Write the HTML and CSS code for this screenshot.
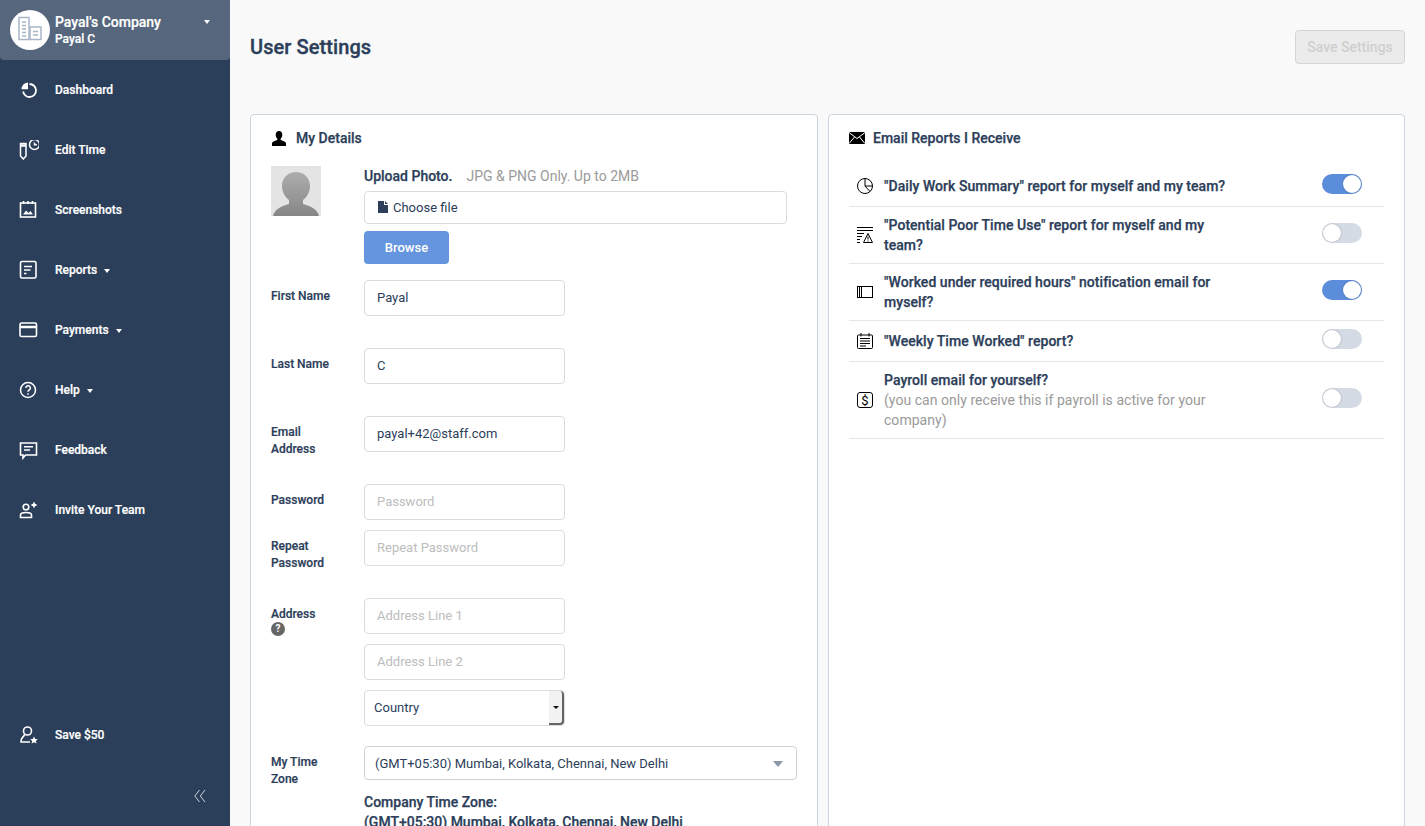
FILE: index.html
```html
<!DOCTYPE html>
<html lang="en">
<head>
    <meta charset="UTF-8">
    <title>User Settings</title>
    <link rel="stylesheet" href="styles.css">
</head>
<body>
    <aside class="sidebar">
        <div class="company">
            <div class="company-logo">
                <svg width="36" height="30" viewBox="0 0 36 30" fill="none" stroke="#a9b6c8" stroke-width="1.5">
                    <rect x="9" y="4.500" width="10" height="22"/>
                    <path d="M12 9h4M12 12.500h4M12 16h4M12 19.500h4M12 23h4"/>
                    <rect x="20" y="14" width="11" height="12.500"/>
                    <path d="M23 18.500h5M23 22h5"/>
                </svg>
            </div>
            <div class="company-text">
                <div class="company-name">Payal's Company</div>
                <div class="company-user">Payal C</div>
            </div>
            <span class="caret company-caret"></span>
        </div>

        <nav class="nav">
            <a class="nav-item">
                <svg class="nav-icon" viewBox="0 0 20 20" fill="none" stroke="#fff" stroke-width="1.800"><path d="M10.500 4a6.500 6.500 0 1 1-6.400 7.500"/><path d="M2.500 9.200A7 7 0 0 1 9 2.500v6.700z" fill="#fff" stroke="none"/></svg>
                Dashboard
            </a>
            <a class="nav-item">
                <svg class="nav-icon" viewBox="0 0 20 20" fill="none" stroke="#fff" stroke-width="1.500"><path d="M1.500 3.500H7v12.500l-2.700 3-2.800-3z"/><path d="M1.500 5.500H7" stroke-width="2.500"/><circle cx="15.500" cy="4.500" r="5"/><path d="M15.500 2.500v2.300h2.300"/></svg>
                Edit Time
            </a>
            <a class="nav-item">
                <svg class="nav-icon" viewBox="0 0 20 20" fill="none" stroke="#fff" stroke-width="1.600"><rect x="1.500" y="3" width="15" height="14"/><path d="M4.500 1v3M9 1v3M13.500 1v3"/><path d="M4 14.500l3-4 2.500 2.500 2-2 2.500 3.500z" fill="#fff" stroke="none"/></svg>
                Screenshots
            </a>
            <a class="nav-item">
                <svg class="nav-icon" viewBox="0 0 20 20" fill="none" stroke="#fff" stroke-width="1.600"><rect x="1.500" y="1.500" width="15.500" height="16.500" rx="1.500"/><path d="M5 6.500h8M5 10h6.500M5 13.500h2.500"/></svg>
                Reports<span class="caret"></span>
            </a>
            <a class="nav-item">
                <svg class="nav-icon" viewBox="0 0 20 20" fill="none" stroke="#fff" stroke-width="1.600"><rect x="1" y="3" width="16.500" height="13.500" rx="1.500"/><path d="M1 7h16.500" stroke-width="2.500"/></svg>
                Payments<span class="caret"></span>
            </a>
            <a class="nav-item">
                <svg class="nav-icon" viewBox="0 0 20 20" fill="none" stroke="#fff" stroke-width="1.500"><circle cx="9" cy="10" r="7.500"/><path d="M6.800 8a2.300 2.300 0 1 1 3.400 2c-.8.500-1.200.9-1.200 1.800"/><path d="M9 13.200v1.500"/></svg>
                Help<span class="caret"></span>
            </a>
            <a class="nav-item">
                <svg class="nav-icon" viewBox="0 0 20 20" fill="none" stroke="#fff" stroke-width="1.600"><path d="M1.500 3h16v12H6.500l-2.500 3v-3H1.500z"/><path d="M5 6.800h9M5 10h6"/></svg>
                Feedback
            </a>
            <a class="nav-item">
                <svg class="nav-icon" viewBox="0 0 20 20" fill="none" stroke="#fff" stroke-width="1.600"><circle cx="7" cy="7" r="2.800"/><path d="M1.500 17.500v-2.500c0-1.500 1.500-2.500 5.500-2.500s5.500 1 5.500 2.500v2.500z"/><path d="M15 2.500v5M12.500 5h5" stroke-width="1.800"/></svg>
                Invite Your Team
            </a>
        </nav>

        <a class="nav-item nav-bottom">
            <svg class="nav-icon" viewBox="0 0 20 20" fill="none" stroke="#fff" stroke-width="1.600"><circle cx="8.500" cy="6" r="4"/><path d="M5.500 9.500c-.5 2-2.500 3-3 4.500-.3 1-.5 2-.5 3h9"/><path d="M15 11.500l1.200 2.400 2.600.3-1.900 1.800.5 2.600-2.400-1.300-2.400 1.300.5-2.600-1.900-1.800 2.600-.3z" fill="#fff" stroke="none"/></svg>
            Save $50
        </a>
        <div class="collapse">
            <svg width="12" height="14" viewBox="0 0 12 14" fill="none" stroke="#c9d1dc" stroke-width="1"><path d="M5.500 1L.8 7l4.700 6M11 1L6.300 7l4.700 6"/></svg>
        </div>
    </aside>

    <main class="main">
        <header class="page-header">
            <h1>User Settings</h1>
            <button class="save-btn" disabled>Save Settings</button>
        </header>

        <div class="cards">
            <section class="card details-card">
                <h2 class="card-title">
                    <svg width="14" height="15" viewBox="0 0 14 15" fill="#000"><path d="M7 0c2 0 3.300 1.500 3.300 3.700 0 1.600-.7 3-1.600 3.900v1.300c2.500.8 5.300 1.700 5.300 3.600V15H0v-2.500c0-1.900 2.800-2.800 5.300-3.600V7.600C4.400 6.700 3.700 5.300 3.700 3.700 3.700 1.500 5 0 7 0z"/></svg>
                    My Details
                </h2>

                <div class="upload-row">
                    <div class="avatar">
                        <svg width="50" height="50" viewBox="0 0 50 50">
                            <defs>
                                <linearGradient id="avatarFill" x1="0" y1="0" x2="0" y2="1">
                                    <stop offset="0" stop-color="#adadad"/>
                                    <stop offset="1" stop-color="#868686"/>
                                </linearGradient>
                            </defs>
                            <path fill="url(#avatarFill)" d="M25 6c8 0 14 6 14 14 0 6-3 11-7 14v4c6 2 14 4 16 12H2c2-8 10-10 16-12v-4c-4-3-7-8-7-14 0-8 6-14 14-14z"/>
                        </svg>
                    </div>
                    <div class="upload-body">
                        <div class="upload-label"><strong>Upload Photo.</strong><span class="upload-hint">JPG &amp; PNG Only. Up to 2MB</span></div>
                        <div class="file-box">
                            <svg width="10" height="12" viewBox="0 0 10 12" fill="#2c3e5a"><path d="M0 0h6v4h4v8H0zM7 0l3 3H7z"/></svg>
                            Choose file
                        </div>
                        <button class="browse-btn">Browse</button>
                    </div>
                </div>

                <div class="form-row row-gap">
                    <label class="form-label">First Name</label>
                    <input class="text-input" type="text" value="Payal">
                </div>
                <div class="form-row row-gap">
                    <label class="form-label">Last Name</label>
                    <input class="text-input" type="text" value="C">
                </div>
                <div class="form-row row-gap">
                    <label class="form-label">Email Address</label>
                    <input class="text-input" type="text" value="payal+42@staff.com">
                </div>
                <div class="form-row row-gap-small">
                    <label class="form-label">Password</label>
                    <input class="text-input" type="text" placeholder="Password">
                </div>
                <div class="form-row row-gap">
                    <label class="form-label">Repeat Password</label>
                    <input class="text-input" type="text" placeholder="Repeat Password">
                </div>
                <div class="form-row row-gap-country">
                    <label class="form-label">Address<span class="help-dot">?</span></label>
                    <div class="address-fields">
                        <input class="text-input" type="text" placeholder="Address Line 1">
                        <input class="text-input" type="text" placeholder="Address Line 2">
                        <div class="country-select">
                            Country
                            <span class="country-arrow"></span>
                        </div>
                    </div>
                </div>
                <div class="form-row">
                    <label class="form-label">My Time Zone</label>
                    <div class="zone-fields">
                        <div class="zone-select">
                            (GMT+05:30) Mumbai, Kolkata, Chennai, New Delhi
                            <span class="zone-arrow"></span>
                        </div>
                        <div class="company-zone">Company Time Zone:<br>(GMT+05:30) Mumbai, Kolkata, Chennai, New Delhi</div>
                    </div>
                </div>
            </section>

            <section class="card reports-card">
                <h2 class="card-title">
                    <svg width="16" height="12" viewBox="0 0 16 12"><rect width="16" height="12" fill="#000"/><path d="M0 .5l8 6 8-6M0 11.500l5.500-6.500M16 11.500L10.500 5" fill="none" stroke="#fff" stroke-width="1"/></svg>
                    Email Reports I Receive
                </h2>

                <div class="report-row row-first">
                    <svg class="report-icon" viewBox="0 0 16 16" fill="none" stroke="#000"><circle cx="8" cy="8" r="7.500"/><path d="M8 .5V8h7.500M8 8l5 5.500"/></svg>
                    <div class="report-text">"Daily Work Summary" report for myself and my team?</div>
                    <span class="toggle on"></span>
                </div>
                <div class="report-row">
                    <svg class="report-icon" viewBox="0 0 16 16" fill="none" stroke="#000"><path d="M0 .5h16M0 3.500h16M0 6.500h7M0 9.500h5M0 12.500h3M0 15.500h3"/><path d="M11 6.500l4.500 9h-9z"/><path d="M11 9.500v3M11 13.500v1"/></svg>
                    <div class="report-text">"Potential Poor Time Use" report for myself and my team?</div>
                    <span class="toggle"></span>
                </div>
                <div class="report-row">
                    <svg class="report-icon" viewBox="0 0 16 12" fill="none" stroke="#000"><rect x=".5" y=".5" width="15" height="11"/><path d="M2.500 1v10M4.500 1v10"/></svg>
                    <div class="report-text">"Worked under required hours" notification email for myself?</div>
                    <span class="toggle on"></span>
                </div>
                <div class="report-row">
                    <svg class="report-icon" viewBox="0 0 16 16" fill="none" stroke="#000"><rect x=".5" y="2" width="15" height="13.500" rx="1"/><path d="M4 0v3.500M12 0v3.500M3 5.500h10M3 8h10M3 10.500h10M3 13h6"/></svg>
                    <div class="report-text">"Weekly Time Worked" report?</div>
                    <span class="toggle"></span>
                </div>
                <div class="report-row">
                    <svg class="report-icon" viewBox="0 0 16 16" fill="none" stroke="#000"><rect x=".5" y=".5" width="15" height="15" rx="2.500"/><text class="dollar-glyph" x="8" y="12.800" text-anchor="middle" fill="#000" stroke="none">$</text></svg>
                    <div class="report-text">Payroll email for yourself?<br><span class="report-note">(you can only receive this if payroll is active for your company)</span></div>
                    <span class="toggle"></span>
                </div>
            </section>
        </div>
    </main>
</body>
</html>
```

FILE: styles.css
```css
* {
    box-sizing: border-box;
}
html, body {
    height: 100%;
}
body {
    margin: 0;
    display: flex;
    height: 826px;
    overflow: hidden;
    font-family: Roboto, "Liberation Sans", sans-serif;
    font-size: 14px;
    color: #2c3e5a;
    background-color: #f9f9f9;
}

/* sidebar */
.sidebar {
    width: 230px;
    flex-shrink: 0;
    display: flex;
    flex-direction: column;
    background-color: #2c3f5a;
    color: #fff;
}
.company {
    height: 60px;
    display: flex;
    align-items: center;
    padding: 0 20px 0 10px;
    background-color: #56677d;
    border-radius: 0 0 4px 4px;
}
.company-logo {
    width: 40px;
    height: 40px;
    flex-shrink: 0;
    display: flex;
    align-items: center;
    justify-content: center;
    margin-right: 5px;
    border-radius: 50%;
    background-color: #fff;
}
.company-logo svg {
    margin: 0 0 4px -5px;
}
.company-text {
    flex: 1;
    padding-top: 2px;
    font-weight: 500;
    -webkit-text-stroke: 0.2px #fff;
}
.company-name {
    font-size: 14px;
    line-height: 17px;
}
.company-user {
    font-size: 12px;
    line-height: 17px;
}
.caret {
    display: inline-block;
    margin-left: 7px;
    border-left: 3.500px solid transparent;
    border-right: 3.500px solid transparent;
    border-top: 4px solid #fff;
}
.company-caret {
    align-self: flex-start;
    margin-top: 20px;
}
.nav {
    display: flex;
    flex-direction: column;
    flex: 1;
}
.nav-item {
    height: 60px;
    display: flex;
    align-items: center;
    padding-left: 19px;
    font-size: 12px;
    font-weight: 500;
    color: #fff;
    -webkit-text-stroke: 0.2px #fff;
}
.nav-item .caret {
    margin-top: 1px;
}
.nav-icon {
    width: 20px;
    height: 20px;
    flex-shrink: 0;
    margin-right: 16px;
}
.nav-bottom {
    height: 30px;
}
.collapse {
    height: 14px;
    margin: 39px 0 23px;
    padding-left: 194px;
}

/* main */
.main {
    flex: 1;
    min-width: 0;
    padding: 0 20px;
}
.page-header {
    height: 114px;
    display: flex;
    justify-content: space-between;
    align-items: flex-start;
}
.page-header h1 {
    margin: 35px 0 0;
    font-size: 20px;
    line-height: 24px;
    font-weight: 500;
    letter-spacing: 0.08px;
    color: #2c3e5a;
    -webkit-text-stroke: 0.35px #2c3e5a;
}
.save-btn {
    width: 110px;
    height: 34px;
    margin-top: 30px;
    border: 1px solid #d4d4d4;
    border-radius: 4px;
    background-color: #ebebeb;
    font-family: inherit;
    font-size: 14px;
    font-weight: 500;
    color: #cfcfcf;
}
.cards {
    display: flex;
    gap: 10px;
    align-items: stretch;
}
.card {
    height: 760px;
    background: #ffffff;
    border: 1px solid #ccd6e0;
    border-radius: 4px;
}
.details-card {
    width: 568px;
    flex-shrink: 0;
    padding: 0 20px;
}
.reports-card {
    flex: 1;
    padding: 0 20px;
}
.card-title {
    height: 46px;
    margin: 0;
    display: flex;
    align-items: center;
    gap: 8px;
    font-size: 14px;
    font-weight: 500;
    color: #2c3e5a;
    -webkit-text-stroke: 0.25px #2c3e5a;
}
.details-card .card-title {
    padding-left: 1px;
    gap: 10px;
}

/* my details */
.upload-row {
    display: flex;
    margin-top: 5px;
    margin-bottom: 16px;
}
.avatar {
    width: 50px;
    height: 50px;
    margin-right: 43px;
    flex-shrink: 0;
    background-color: #e4e4e4;
}
.avatar svg {
    display: block;
}
.upload-body {
    width: 423px;
}
.upload-label {
    height: 25px;
    line-height: 20px;
}
.upload-label strong {
    font-weight: 500;
    -webkit-text-stroke: 0.25px #2c3e5a;
}
.upload-hint {
    margin-left: 14px;
    color: #9a9a9a;
}
.file-box {
    height: 33px;
    display: flex;
    align-items: center;
    gap: 5px;
    padding: 0 0 1px 13px;
    border: 1px solid #d8dde4;
    border-radius: 4px;
    font-size: 13px;
    color: #2c3e5a;
}
.browse-btn {
    display: block;
    width: 85px;
    height: 33px;
    margin-top: 7px;
    padding-bottom: 2px;
    border: none;
    border-radius: 4px;
    background-color: #6495de;
    font-family: inherit;
    font-size: 13px;
    font-weight: 500;
    color: #fff;
}
.form-row {
    display: grid;
    grid-template-columns: 93px 1fr;
}
.row-gap {
    margin-bottom: 32px;
}
.row-gap-small {
    margin-bottom: 10px;
}
.row-gap-country {
    margin-bottom: 20px;
}
.form-label {
    display: block;
    width: 60px;
    height: 36px;
    padding-top: 8px;
    font-size: 12px;
    line-height: 17px;
    font-weight: 500;
    color: #2c3e5a;
    -webkit-text-stroke: 0.2px #2c3e5a;
}
.text-input {
    display: block;
    width: 201px;
    height: 36px;
    padding: 0 12px 2px;
    border: 1px solid #d8dde4;
    border-radius: 4px;
    font-family: inherit;
    font-size: 13px;
    color: #2c3e5a;
    background: #fff;
}
.text-input::placeholder {
    color: #bdbdbd;
    opacity: 1;
}
.help-dot {
    display: block;
    width: 14px;
    height: 14px;
    margin-top: -1px;
    border-radius: 50%;
    background-color: #666;
    color: #fff;
    font-size: 10px;
    font-weight: 700;
    line-height: 14px;
    text-align: center;
    -webkit-text-stroke: 0;
}
.address-fields {
    display: flex;
    flex-direction: column;
    gap: 10px;
}
.country-select {
    position: relative;
    width: 201px;
    height: 36px;
    display: flex;
    align-items: center;
    padding: 0 0 2px 9px;
    border: 1px solid #d8dde4;
    border-radius: 4px;
    font-size: 13px;
    color: #2c3e5a;
}
.country-arrow {
    position: absolute;
    top: 0;
    right: 0;
    bottom: 0;
    width: 15px;
    border-right: 2px solid #666;
    border-bottom: 2px solid #666;
    border-radius: 0 4px 4px 0;
    background-color: #f2f2f2;
}
.country-arrow::after {
    content: "";
    position: absolute;
    top: 15px;
    left: 4px;
    border-left: 3px solid transparent;
    border-right: 3px solid transparent;
    border-top: 3px solid #111;
}
.zone-select {
    position: relative;
    width: 433px;
    height: 34px;
    display: flex;
    align-items: center;
    padding-left: 10px;
    border: 1px solid #ccd3da;
    border-radius: 4px;
    font-size: 13px;
    color: #2c3e5a;
}
.zone-arrow {
    position: absolute;
    top: 14px;
    right: 13px;
    border-left: 5px solid transparent;
    border-right: 5px solid transparent;
    border-top: 6px solid #8a97a6;
}
.company-zone {
    margin-top: 12px;
    line-height: 20px;
    font-weight: 500;
    color: #2c3e5a;
    -webkit-text-stroke: 0.25px #2c3e5a;
}

/* email reports */
.report-row {
    display: flex;
    align-items: center;
    min-height: 41px;
    padding: 8px 0;
    border-bottom: 1px solid #e6e6e6;
    line-height: 20px;
    font-weight: 500;
    color: #2c3e5a;
}
.row-first {
    margin-top: 5px;
}
.report-icon {
    width: 16px;
    height: 16px;
    margin: 0 11px 0 8px;
    flex-shrink: 0;
}
.report-text {
    flex: 1;
    max-width: 345px;
    letter-spacing: 0.04px;
    -webkit-text-stroke: 0.25px #2c3e5a;
}
.report-note {
    font-weight: 400;
    color: #9a9a9a;
    -webkit-text-stroke: 0;
}
.dollar-glyph {
    font-size: 13px;
    font-weight: 400;
    font-family: Roboto, sans-serif;
}
.toggle {
    position: relative;
    width: 40px;
    height: 20px;
    flex-shrink: 0;
    margin-left: auto;
    margin-right: 22px;
    margin-bottom: 4px;
    border-radius: 10px;
    background-color: #d5dbe5;
}
.toggle::after {
    content: "";
    position: absolute;
    top: 1px;
    left: 1px;
    width: 18px;
    height: 18px;
    border-radius: 50%;
    background-color: #fff;
    box-shadow: 0 0 2px rgba(0, 0, 0, 0.3);
}
.toggle.on {
    background-color: #5b8ddb;
}
.toggle.on::after {
    left: 21px;
}
```
